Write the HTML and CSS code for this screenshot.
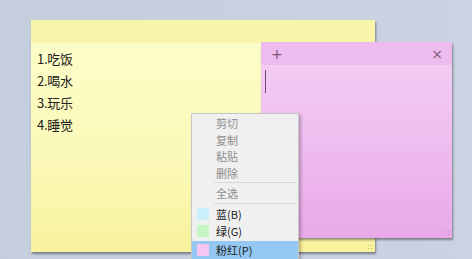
FILE: index.html
```html
<!DOCTYPE html>
<html>
<head>
<meta charset="utf-8">
<link rel="stylesheet" href="styles.css">
</head>
<body>
<div class="desktop">
  <div class="note note-yellow">
    <div class="note-head"></div>
    <div class="note-body">
      <div class="line">1.吃饭</div>
      <div class="line">2.喝水</div>
      <div class="line">3.玩乐</div>
      <div class="line">4.睡觉</div>
    </div>
    <span class="grip"></span>
  </div>
  <div class="note note-pink">
    <div class="note-head">
      <span class="plus">+</span>
      <span class="close">×</span>
    </div>
    <div class="note-body"><span class="caret"></span></div>
    <span class="grip"></span>
  </div>
  <div class="menu">
    <div class="item disabled">剪切</div>
    <div class="item disabled">复制</div>
    <div class="item disabled">粘贴</div>
    <div class="item disabled">删除</div>
    <div class="sep"></div>
    <div class="item disabled">全选</div>
    <div class="sep"></div>
    <div class="item color"><span class="sw sw-blue"></span>蓝(B)</div>
    <div class="item color"><span class="sw sw-green"></span>绿(G)</div>
    <div class="item active"><span class="sw sw-pink"></span>粉红(P)</div>
  </div>
</div>
</body>
</html>
```
FILE: styles.css
```css
html, body {
  margin: 0;
  padding: 0;
}
body {
  width: 472px;
  height: 259px;
  overflow: hidden;
  background: linear-gradient(90deg, #c4cedd 0%, #c9d3e2 100%);
  font-family: "Noto Sans CJK SC", "Liberation Sans", sans-serif;
}
.desktop {
  position: relative;
  width: 472px;
  height: 259px;
}
.note {
  position: absolute;
  display: flex;
  flex-direction: column;
  box-shadow: 1px 2px 2px rgba(60, 60, 70, 0.55);
}
.note-yellow {
  left: 31px;
  top: 20px;
  width: 344px;
  height: 232px;
  background: linear-gradient(180deg, #fdfdca 0%, #fbf9b8 60%, #f8f29c 100%);
}
.note-yellow .note-head {
  height: 23px;
  background: #f8f4aa;
}
.note-body {
  flex: 1;
  padding: 5px 6px;
}
.line {
  height: 22px;
  line-height: 22px;
  font-size: 13px;
  color: #222;
  letter-spacing: -0.3px;
}
.note-pink {
  left: 261px;
  top: 42px;
  width: 191px;
  height: 196px;
  background: linear-gradient(180deg, #f3d0f3 0%, #efbdef 50%, #e9a9e9 100%);
}
.note-pink .note-head {
  height: 23px;
  background: #edbbee;
  display: flex;
  align-items: center;
  justify-content: space-between;
  padding: 0 9px 0 10px;
  color: #7a5a7c;
}
.plus {
  font-size: 14px;
  line-height: 14px;
  font-family: "DejaVu Sans", sans-serif;
}
.close {
  font-size: 14px;
  line-height: 14px;
  font-family: "DejaVu Sans", sans-serif;
}
.note-pink .note-body {
  padding: 5px 4px;
}
.caret {
  display: block;
  width: 1px;
  height: 23px;
  background: #6a5070;
}
.grip {
  position: absolute;
  right: 2px;
  bottom: 2px;
  width: 6px;
  height: 6px;
  background-image: radial-gradient(circle, rgba(150,140,120,0.6) 0.7px, transparent 1px);
  background-size: 3px 3px;
}
.menu {
  position: absolute;
  left: 191px;
  top: 113px;
  width: 108px;
  height: 150px;
  background: #f0f0f0;
  border: 1px solid #c6c6c6;
  box-shadow: 2px 2px 3px rgba(0, 0, 0, 0.25);
  padding: 1px 2px 2px;
  font-size: 11px;
  box-sizing: border-box;
}
.item {
  height: 16.5px;
  display: flex;
  align-items: center;
  padding-left: 22px;
  color: #1a1a1a;
  position: relative;
}
.item.disabled {
  color: #8d8d8d;
}
.item.color {
  height: 17px;
}
.sep {
  height: 1px;
  background: #d9d9d9;
  margin: 1px 0 2px 20px;
}
.item.active {
  background: #94c8f2;
  margin: 1px -2px 0;
  padding-left: 24px;
  height: 18px;
}
.sw {
  position: absolute;
  left: 3px;
  top: 2px;
  width: 12px;
  height: 12px;
}
.item.active .sw {
  left: 5px;
  top: 3px;
}
.sw-blue { background: #c9f0fb; }
.sw-green { background: #c6f5c4; }
.sw-pink { background: #f6c5f2; }
```
